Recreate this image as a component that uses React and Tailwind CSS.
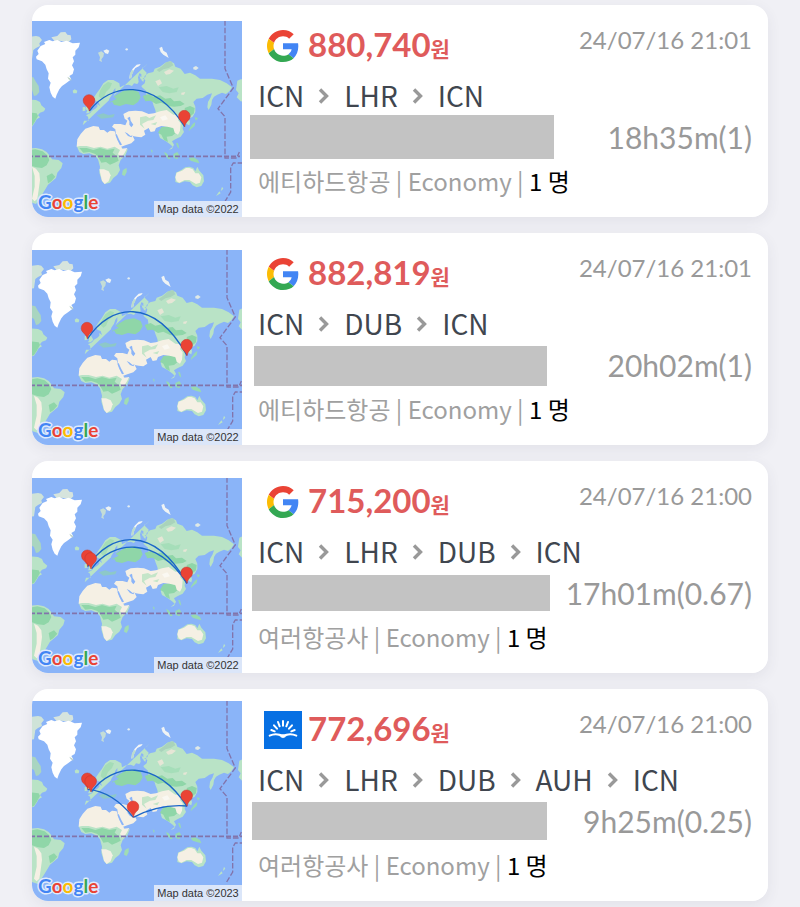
import React from "react";

const SANS = "font-['Noto_Sans_CJK_KR','Noto_Sans',sans-serif]";
const LATO = "font-['Lato','Noto_Sans_CJK_KR',sans-serif]";

const ARC_LONDON = "M215 335 C275 252 405 232 501 379";
const ARC_DUBLIN = "M203 329 C270 226 400 200 501 379";

const FLIGHTS = [
  {
    id: 1,
    logo: "google",
    price: "880,740",
    saved: "24/07/16 21:01",
    route: ["ICN", "LHR", "ICN"],
    duration: "18h35m(1)",
    airline: "에티하드항공",
    bar: "w-[304px] h-11",
    mapHeight: 196,
    mapClass: "h-[196px]",
    year: 2022,
    shift: 0,
    arcs: ["M208 333 C270 250 400 230 494 380"],
    pins: [[208, 333], [494, 380]],
  },
  {
    id: 2,
    logo: "google",
    price: "882,819",
    saved: "24/07/16 21:01",
    route: ["ICN", "DUB", "ICN"],
    duration: "20h02m(1)",
    airline: "에티하드항공",
    bar: "ml-1 mt-[3px] w-[293px] h-10",
    mapHeight: 195,
    mapClass: "h-[195px]",
    year: 2022,
    shift: 6,
    arcs: [ARC_DUBLIN],
    pins: [[202, 329], [501, 380]],
  },
  {
    id: 3,
    logo: "google",
    price: "715,200",
    saved: "24/07/16 21:00",
    route: ["ICN", "LHR", "DUB", "ICN"],
    duration: "17h01m(0.67)",
    airline: "여러항공사",
    bar: "ml-0.5 mt-1 w-[298px] h-9",
    mapHeight: 195,
    mapClass: "h-[195px]",
    year: 2022,
    shift: 6,
    arcs: [ARC_DUBLIN, ARC_LONDON],
    pins: [[203, 328], [213, 336], [501, 379]],
  },
  {
    id: 4,
    logo: "sunrise",
    price: "772,696",
    saved: "24/07/16 21:00",
    route: ["ICN", "LHR", "DUB", "AUH", "ICN"],
    duration: "9h25m(0.25)",
    airline: "여러항공사",
    bar: "ml-0.5 mt-[3px] w-[295px] h-[38px]",
    mapHeight: 200,
    mapClass: "h-[200px]",
    year: 2023,
    shift: 6,
    arcs: [ARC_LONDON, "M203 328 Q278 334 340 412", "M340 412 Q420 371 501 378"],
    pins: [[203, 328], [213, 336], [340, 412], [501, 379]],
  },
];

function World() {
  return (
    <g>
      {/* Canadian arctic and east coast */}
      <g fill="#b9e3c6">
        <path d="M20 112 L48 108 58 110 66 120 58 130 60 138 48 144 40 150 36 178 20 180Z" fill="#cfe3d8" />
        <path d="M24 228 L40 232 48 246 56 258 58 276 50 286 42 288 36 270 24 262Z" fill="#a9d5c0" />
        <path d="M20 298 L48 300 60 306 64 316 76 326 72 334 60 338 54 346 60 352 50 358 44 368 36 380 20 384Z" />
      </g>
      <path d="M22 336 L50 340 54 348 44 366 36 378 22 384Z" fill="#8fd6a8" />
      {/* Greenland */}
      <path d="M94 112 L112 108 122 97 136 96 142 104 152 106 154 118 146 126 132 124 118 122 104 124Z" fill="#d6e4dd" />
      <path d="M62 138 L76 132 72 126 88 120 98 124 112 120 124 126 140 122 158 130 180 128 176 142 166 152 166 164 158 172 162 184 156 196 162 208 158 222 148 228 154 238 138 250 126 258 118 268 110 284 106 296 98 290 92 278 88 262 92 248 84 236 86 220 80 208 76 194 66 184 50 178 48 170 56 162 52 152Z" fill="#fff" />
      <path d="M142 230 L152 236 154 242 146 238Z" fill="#b9cfc4" />
      {/* Iceland, Svalbard and arctic islands */}
      <path d="M158 272 L164 268 172 272 170 280 160 280Z" fill="#b9e3c6" />
      <path d="M234 158 L244 154 252 160 250 170 244 178 246 186 238 182 240 172Z" fill="#c4ddd6" />
      <path d="M250 152 L260 148 268 152 264 162 256 160Z" fill="#eef3f4" />
      <circle cx="320" cy="148" r="3.5" fill="#e3edf2" />
      <path d="M328 236 L330 222 338 206 350 194 362 192 358 198 346 204 338 216 334 232Z" fill="#f4f6f6" />
      <path d="M328 234 L330 220 336 210 342 212 336 224 334 236Z" fill="#bcdccd" />
      <path d="M418 144 L426 140 430 152 440 158 446 174 440 170 430 164 422 156Z" fill="#eff3f4" />
      <path d="M520 202 L528 198 536 204 528 210 520 208Z" fill="#dfe9e6" />
      {/* Eurasia */}
      <path fill="#b9e3c6" d="M188 376 L192 362 206 362 204 350 198 346 210 340 216 332 226 326 232 320 232 312 240 318 236 306 226 302 222 292 230 280 240 266 250 250 264 240 280 240 298 250 300 262 312 256 326 254 336 258 342 250 352 252 356 246 354 232 358 220 364 222 364 240 370 246 374 228 384 220 400 216 404 206 420 200 436 188 450 184 462 190 466 200 482 206 494 222 510 218 526 226 540 236 556 236 576 236 600 240 620 250 636 262 628 274 618 282 606 278 592 284 582 290 576 300 574 314 566 330 562 322 564 306 572 292 576 280 562 284 548 294 530 296 520 306 526 320 526 336 518 350 506 356 510 366 508 376 500 372 494 362 486 358 490 372 488 386 492 396 482 410 466 418 456 424 462 434 456 446 446 450 458 440 452 434 438 424 420 414 416 402 424 394 434 390 450 382 440 374 424 366 412 350 408 340 406 330 400 314 396 300 380 288 378 276 378 272 366 262 362 254 364 258 374 250 376 240 362 230 358 226 362 238 376 232 380 218 366 204 374 200 384 190 384Z" />
      <path fill="#b9e3c6" d="M196 326 L200 318 206 312 208 322 214 332 206 340 198 340 202 332Z" />
      <path fill="#b9e3c6" d="M188 322 L196 320 196 332 188 334Z" />
      {/* Darker forests */}
      <g fill="#8fd6a8">
        <path d="M250 256 L264 246 276 250 270 264 258 276 252 290 244 296 236 288 240 272Z" opacity=".5" />
        <path d="M290 284 L310 272 336 268 356 276 362 292 354 306 340 316 318 312 300 318 282 314 276 304 270 308 272 298Z" />
        <path d="M368 288 L386 282 400 290 420 286 436 296 452 294 462 304 480 302 494 312 482 318 462 320 444 318 424 308 408 312 392 302 376 304Z" />
        <path d="M494 324 L510 318 524 324 522 340 510 350 498 346Z" />
        <path d="M424 382 L444 378 462 386 468 398 456 408 440 410 444 426 432 420 424 404 414 398Z" />
        <path d="M416 262 L440 258 460 266 476 262 470 276 448 280 428 276Z" opacity=".45" />
        <path d="M230 346 L250 340 266 346 284 342 280 352 262 354 244 356Z" opacity=".6" />
      </g>
      <path d="M406 244 L420 238 426 250 414 258Z M432 216 L448 208 462 212 450 222 438 224Z M484 278 L496 276 492 284 484 284Z" fill="#e6e6d6" />
      <path d="M440 186 L454 184 460 196 446 204 430 208 418 216 410 210 424 200Z" fill="#a9d3bb" />
      {/* Arid belt through Arabia and Central Asia */}
      <path fill="#f5f0e4" d="M310 342 L326 334 346 332 366 334 386 342 402 340 420 334 440 330 460 344 480 346 474 360 482 370 480 392 474 404 464 398 460 384 442 380 424 378 408 384 404 394 392 396 386 384 372 392 376 404 364 412 350 410 338 408 344 420 334 430 316 436 304 440 298 424 288 404 286 388 276 380 282 372 302 372 316 376 322 362 314 356Z" />
      <path d="M360 352 L378 348 388 354 408 346 400 360 384 362 366 372 374 386 360 374Z M392 372 L412 366 406 376Z" fill="#c4e5c8" />
      <path d="M420 352 L436 346 444 358 428 362Z" fill="#faf8f2" />
      {/* Africa */}
      <path fill="#b9e3c6" d="M170 438 L176 430 240 430 300 438 314 452 324 446 316 466 302 480 296 496 300 510 292 524 280 534 270 548 254 552 246 544 238 518 240 500 234 478 226 468 208 460 190 462 178 456Z" />
      <path fill="#f5f0e4" d="M170 440 L172 418 182 402 196 386 220 378 236 380 240 390 252 390 262 398 270 392 284 394 290 412 302 432 306 446 322 444 312 462 302 474 294 462 300 450 284 440 262 446 242 440 222 444 200 438 180 438Z" />
      <path fill="#8fd6a8" d="M178 444 L200 444 220 450 240 444 262 450 284 446 278 458 292 470 296 482 284 488 270 494 258 486 244 488 236 474 226 462 208 456 190 458Z" />
      <path fill="#f5f0e4" d="M238 508 L252 508 266 514 272 526 266 544 254 552 246 542Z" />
      <path fill="#a0dcb4" d="M312 508 L320 504 320 516 314 528 306 524 308 512Z" />
      {/* Seas */}
      <g fill="#8ab4f8">
        <path d="M286 404 L290 402 298 420 306 434 300 436 292 420Z" />
        <path d="M280 356 L290 350 302 352 312 358 304 364 290 362 280 364Z" />
        <path d="M322 354 L330 350 332 362 340 374 334 382 328 374 328 364Z" />
        <path d="M268 296 L276 284 280 272 286 264 286 276 280 290 290 296 278 302 266 306Z" />
        <path d="M314 396 L322 400 332 408 338 406 334 412 324 408Z" />
      </g>
      {/* South-east Asia and Japan */}
      <g fill="#98dab0">
        <path d="M432 456 L440 460 452 476 446 478 436 466Z" />
        <path d="M460 462 L472 456 478 466 472 478 462 474Z" />
        <path d="M506 474 L520 472 534 480 538 490 524 486 512 482Z" />
        <path d="M468 428 L474 430 478 446 472 440Z" />
        <path d="M518 372 L526 366 524 378 512 388 506 394 508 386Z" />
        <path d="M524 352 L534 354 528 362Z" />
        <path d="M392 448 L398 452 396 460Z" />
      </g>
      {/* Australia */}
      <path fill="#b9e3c6" d="M466 532 L468 518 484 510 496 502 508 500 520 504 526 514 532 500 538 512 550 526 552 544 544 558 530 562 518 556 510 546 494 544 478 550 466 546Z" />
      <path fill="#f5f0e4" d="M466 532 L470 518 486 512 498 504 508 504 518 508 526 520 536 520 544 532 540 548 528 552 518 546 508 540 494 540 478 548 470 544Z" />
      <path fill="#b9e3c6" d="M606 560 L610 566 602 574Z M598 574 L602 580 588 588Z" />
      {/* South America */}
      <path fill="#b9e3c6" d="M20 446 L48 444 66 448 80 456 90 468 96 478 116 480 128 490 124 504 112 518 108 534 94 546 84 554 76 568 66 584 56 600 48 612 30 606 20 560Z" />
      <path fill="#8fd6a8" d="M20 452 L46 448 68 454 82 466 88 480 80 496 66 504 48 502 20 492Z M80 528 L96 520 106 530 94 544 84 550Z" />
      <path fill="#f5f0e4" d="M36 500 L48 506 58 520 60 540 56 570 52 596 44 604 36 596 44 560 44 528Z" />
      {/* Alaska */}
      <path fill="#b9e3c6" d="M652 242 L662 238 690 238 690 308 662 304 650 292 656 280 648 270Z" />
    </g>
  );
}

function Pin({ x, y }) {
  return (
    <path
      d={`M${x} ${y} c-2 -9 -7 -12 -12 -18 a17.5 17.5 0 1 1 22 0 c-5 5 -8 9 -10 18Z`}
      fill="#ea4335"
      stroke="#c5372c"
      strokeWidth="1.5"
    />
  );
}

function RouteMap({ flight }) {
  return (
    <div className={`relative w-[210px] shrink-0 self-end ${flight.mapClass}`}>
      <svg
        className="block h-full w-full"
        viewBox={`36 63 630 ${flight.mapHeight * 3}`}
        role="img"
        aria-label={flight.route.join(" - ")}
      >
        <rect x="36" y="63" width="630" height="600" fill="#8ab4f8" />
        <g transform={`translate(${flight.shift} 0)`}>
          <World />
          <g fill="none" stroke="#8274ab" strokeWidth="5">
            <path d="M24 469 H660" strokeDasharray="15 6" />
            <path
              d="M615 60 V206 L640 264 L594 326 L615 350 V474 L650 474 L658 456 M670 489 H640 L632 502 V576 L614 606"
              strokeDasharray="17 6"
              strokeWidth="4"
            />
          </g>
        </g>
        <g fill="none" stroke="#1a66c8" strokeWidth="4">
          {flight.arcs.map((d) => (
            <path key={d} d={d} />
          ))}
        </g>
        {flight.pins.map(([x, y]) => (
          <Pin key={`${x}-${y}`} x={x} y={y} />
        ))}
      </svg>
      <div className="absolute inset-x-0 bottom-0 flex items-end justify-between">
        <svg className="block h-8 w-20" viewBox="0 0 80 32">
          <text
            x="6"
            y="24"
            className="font-['Lato',sans-serif] text-[19px] font-bold"
            stroke="#dfeafc"
            strokeWidth="3"
            strokeLinejoin="round"
            style={{ paintOrder: "stroke" }}
          >
            <tspan fill="#4285f4">G</tspan>
            <tspan fill="#ea4335">o</tspan>
            <tspan fill="#fbbc04">o</tspan>
            <tspan fill="#4285f4">g</tspan>
            <tspan fill="#34a853">l</tspan>
            <tspan fill="#ea4335">e</tspan>
          </text>
        </svg>
        <span className="flex h-4 w-[88px] items-center justify-center whitespace-nowrap bg-[#dbe6f9] font-['Liberation_Sans',sans-serif] text-[11px] leading-4 text-[#333]">
          Map data ©{flight.year}
        </span>
      </div>
    </div>
  );
}

function GoogleLogo() {
  return (
    <svg className="h-8 w-8" viewBox="0 0 48 48" aria-label="Google" role="img">
      <path fill="#ea4335" d="M24 9.5c3.54 0 6.71 1.22 9.21 3.6l6.85-6.85C35.9 2.38 30.47 0 24 0 14.62 0 6.51 5.38 2.56 13.22l7.98 6.19C12.43 13.72 17.74 9.5 24 9.5z" />
      <path fill="#4285f4" d="M46.98 24.55c0-1.57-.15-3.09-.38-4.55H24v9.02h12.94c-.58 2.96-2.26 5.48-4.78 7.18l7.73 6c4.51-4.18 7.09-10.36 7.09-17.65z" />
      <path fill="#fbbc05" d="M10.53 28.59c-.48-1.45-.76-2.99-.76-4.59s.27-3.14.76-4.59l-7.98-6.19C.92 16.46 0 20.12 0 24c0 3.88.92 7.54 2.56 10.78l7.97-6.19z" />
      <path fill="#34a853" d="M24 48c6.48 0 11.93-2.13 15.89-5.81l-7.73-6c-2.15 1.45-4.92 2.3-8.16 2.3-6.26 0-11.57-4.22-13.47-9.91l-7.98 6.19C6.51 42.62 14.62 48 24 48z" />
    </svg>
  );
}

function SunriseLogo() {
  return (
    <svg className="h-[38px] w-[38px]" viewBox="0 0 114 114" aria-label="Skyscanner" role="img">
      <rect width="114" height="114" fill="#0770e3" />
      <g stroke="#fff" strokeWidth="6" strokeLinecap="round">
        <path d="M57 30V44M42 33L47 46M72 33L67 46M30 43L39 53M84 43L75 53M22 57L32 61M92 57L82 61" />
      </g>
      <path d="M17 74C29 68 39 69 46 71C54 74 60 74 68 71C75 69 85 68 97 74" fill="none" stroke="#fff" strokeWidth="6" strokeLinecap="round" />
      <path d="M42 70C54 74 60 74 72 70C66 75 63 80 57 80S48 75 42 70Z" fill="#fff" stroke="#fff" strokeWidth="2" />
    </svg>
  );
}

function Chevron() {
  return (
    <svg className="h-[18px] w-3" viewBox="0 0 12 18" fill="none" stroke="#999" strokeWidth="3.4" aria-hidden="true">
      <path d="M2 2.5 L8.5 9 L2 15.5" />
    </svg>
  );
}

function FlightCard({ flight }) {
  return (
    <article className="flex h-[212px] overflow-hidden rounded-2xl bg-white">
      <RouteMap flight={flight} />
      <div className="flex min-w-0 flex-1 flex-col pl-2 pr-4 pt-[22px]">
        <header className="flex h-[50px] items-start justify-between pl-[14px]">
          <div className="flex items-center gap-1.5">
            <span className="flex h-[38px] w-[38px] items-center justify-center">
              {flight.logo === "google" ? <GoogleLogo /> : <SunriseLogo />}
            </span>
            <strong className={`${LATO} pb-1 text-[33px] font-bold leading-[34px] text-[#df5b5b]`}>
              {flight.price}
              <span className={`${SANS} text-[21px] font-bold leading-none`}>원</span>
            </strong>
          </div>
          <time className={`${LATO} whitespace-nowrap text-[24px] leading-[26px] text-[#999]`}>{flight.saved}</time>
        </header>
        <div className={`${SANS} flex h-[38px] items-center gap-[14px] whitespace-nowrap pl-2 text-[28px] leading-9 text-[#40464f]`}>
          {flight.route.map((code, i) => (
            <React.Fragment key={`${code}-${i}`}>
              {i > 0 && <Chevron />}
              <span className="pb-0.5">{code}</span>
            </React.Fragment>
          ))}
        </div>
        <div className="flex h-11 items-start justify-between">
          <div className={`shrink-0 bg-[#c3c3c3] ${flight.bar}`} />
          <span className={`${LATO} whitespace-nowrap text-[30px] leading-[44px] text-[#999]`}>{flight.duration}</span>
        </div>
        <p className={`${SANS} whitespace-nowrap pl-2 text-[24px] leading-[44px] text-[#a0a0a0]`}>
          {flight.airline} | Economy | <span className="text-black">1 명</span>
        </p>
      </div>
    </article>
  );
}

export default function App() {
  return (
    <main className="flex min-h-screen flex-col gap-4 bg-[#f0f0f5] px-8 pb-1.5 pt-[5px]">
      {FLIGHTS.map((flight) => (
        <div key={flight.id} className="rounded-2xl shadow-[0_4px_14px_rgba(60,60,90,0.08)]">
          <FlightCard flight={flight} />
        </div>
      ))}
    </main>
  );
}
